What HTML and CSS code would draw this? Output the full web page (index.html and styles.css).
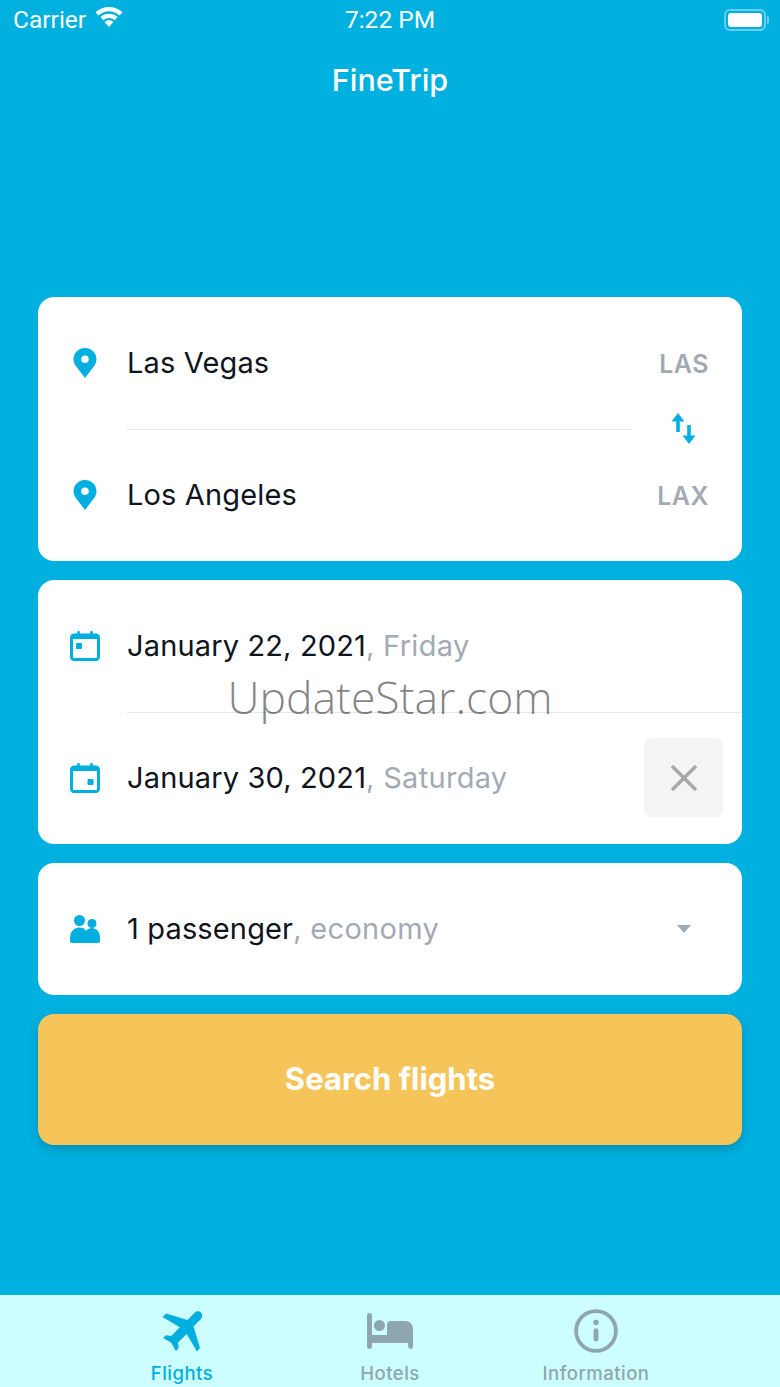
FILE: index.html
```html
<!DOCTYPE html>
<html lang="en">
<head>
<meta charset="utf-8">
<title>FineTrip</title>
<link rel="stylesheet" href="styles.css">
</head>
<body>
<div class="screen">
  <div class="status">
    <div class="status-left">
      <span>Carrier</span>
      <svg class="wifi" viewBox="0 0 28 22"><path d="M14 1C8.800 1 4.300 3 .6 6.300l2.800 3.200C6.400 6.900 10 5.300 14 5.300s7.600 1.600 10.600 4.200l2.800-3.200C23.700 3 19.200 1 14 1z"/><path d="M14 7.800c-3.300 0-6.100 1.200-8.500 3.200l2.900 3.200c1.500-1.300 3.400-2.100 5.600-2.100s4.100.8 5.600 2.100l2.900-3.200c-2.400-2-5.200-3.200-8.500-3.200z"/><path d="M14 14.300c-1.700 0-3.200.6-4.300 1.700l4.300 5 4.300-5c-1.100-1.100-2.600-1.700-4.300-1.700z"/></svg>
    </div>
    <div class="status-time">7:22 PM</div>
    <div class="battery"><span class="battery-fill"></span></div>
  </div>
  <header class="nav">FineTrip</header>

  <main class="form">
    <section class="card">
      <div class="row">
        <svg class="ico" viewBox="0 0 30 30"><path fill-rule="evenodd" d="M15 0C8.600 0 3.500 4.900 3.500 11.200c0 3.200 1.500 5.800 3.500 8.300L15 30l8-10.500c2-2.500 3.500-5.100 3.500-8.300C26.500 4.900 21.400 0 15 0zm0 7.500a3.800 3.800 0 1 1 0 7.600 3.800 3.800 0 0 1 0-7.600z"/></svg>
        <span class="main">Las Vegas</span>
        <span class="code">LAS</span>
      </div>
      <div class="rule rule-short"></div>
      <svg class="swap" viewBox="0 0 26 33"><path d="M8 1l6.500 8.500h-4.700V20H6.200V9.500H1.500z"/><path d="M17.200 13h3.600v10.500h4.700L19 32l-6.500-8.500h4.700z"/></svg>
      <div class="row">
        <svg class="ico" viewBox="0 0 30 30"><path fill-rule="evenodd" d="M15 0C8.600 0 3.500 4.900 3.500 11.200c0 3.200 1.500 5.800 3.500 8.300L15 30l8-10.500c2-2.500 3.500-5.100 3.500-8.300C26.500 4.900 21.400 0 15 0zm0 7.500a3.800 3.800 0 1 1 0 7.600 3.800 3.800 0 0 1 0-7.600z"/></svg>
        <span class="main">Los Angeles</span>
        <span class="code">LAX</span>
      </div>
    </section>

    <section class="card">
      <div class="row">
        <svg class="ico" viewBox="0 0 30 30"><path fill-rule="evenodd" d="M8.500 0c.8 0 1.300.5 1.300 1.300V2.500h10.400V1.300c0-.8.500-1.300 1.300-1.300s1.300.5 1.300 1.300v1.200H26c2.300 0 4 1.700 4 4V26c0 2.300-1.700 4-4 4H4c-2.300 0-4-1.700-4-4V6.500c0-2.300 1.700-4 4-4h3.200V1.300C7.200.5 7.700 0 8.500 0zM3 8v18c0 .6.400 1 1 1h22c.6 0 1-.4 1-1V8z"/><rect x="6" y="12" width="6" height="6" rx="1"/></svg>
        <span class="main">January 22, 2021<span class="sub">, Friday</span></span>
      </div>
      <div class="rule rule-full"></div>
      <div class="row">
        <svg class="ico" viewBox="0 0 30 30"><path fill-rule="evenodd" d="M8.500 0c.8 0 1.300.5 1.300 1.300V2.500h10.400V1.300c0-.8.500-1.300 1.300-1.300s1.300.5 1.300 1.300v1.200H26c2.300 0 4 1.700 4 4V26c0 2.300-1.700 4-4 4H4c-2.300 0-4-1.700-4-4V6.500c0-2.300 1.700-4 4-4h3.200V1.300C7.200.5 7.700 0 8.500 0zM3 8v18c0 .6.400 1 1 1h22c.6 0 1-.4 1-1V8z"/><rect x="17.500" y="16" width="6" height="6" rx="1"/></svg>
        <span class="main">January 30, 2021<span class="sub">, Saturday</span></span>
        <button class="clear" type="button" aria-label="Clear">
          <svg viewBox="0 0 28 28"><path d="M2 2l24 24M26 2L2 26"/></svg>
        </button>
      </div>
    </section>

    <section class="card">
      <div class="row">
        <svg class="ico" viewBox="0 0 30 30"><circle cx="9.500" cy="6.500" r="5.500"/><circle cx="22" cy="9.500" r="4.500"/><path d="M0 27v-3C0 17.500 4.500 13.500 9.500 13.500c3 0 5 1 6.500 3.200 1.500-1.900 3.500-2.700 6-2.700 4 0 8 3.500 8 9.500v3.500c0 1.200-.8 2-2 2H2c-1.200 0-2-.8-2-2z"/></svg>
        <span class="main">1 passenger<span class="sub">, economy</span></span>
        <span class="caret"></span>
      </div>
    </section>

    <button class="search" type="button">Search flights</button>
  </main>

  <nav class="tabs">
    <div class="tab tab-active">
      <svg class="tab-ico" viewBox="0 0 44 44"><path d="M41 3.500c-1.800-1.700-4.600-1.500-6.400.3L27.500 11 6 4.500 2.500 8l17.300 10.300-8.600 8.800-5.200-.9L3 29l8.200 4.500 4.600 8.500 2.900-3-.8-5.300 8.800-8.700L37 42.500l3-3.500-6.500-21.500 7.200-7.300c1.900-1.800 2-4.900.3-6.700z"/></svg>
      <span>Flights</span>
    </div>
    <div class="tab">
      <svg class="tab-ico tab-bed" viewBox="0 0 46 36"><rect width="5" height="36" rx="2.400"/><path d="M20 22V11.500C20 9.500 21.500 8 23.500 8H38c4.600 0 8 3.400 8 8v17.600a2.400 2.400 0 0 1-4.800 0V30H3v-8z"/><circle cx="12.500" cy="12.500" r="5.500"/></svg>
      <span>Hotels</span>
    </div>
    <div class="tab">
      <svg class="tab-ico" viewBox="0 0 46 46"><circle class="info-ring" cx="23" cy="23" r="20.800"/><circle cx="23" cy="14" r="2.800"/><rect x="20.500" y="20" width="5" height="14" rx="2.500"/></svg>
      <span>Information</span>
    </div>
  </nav>

  <div class="watermark">UpdateStar.com</div>
</div>
</body>
</html>
```
FILE: styles.css
```css
* { box-sizing: border-box; }
html, body { margin: 0; padding: 0; }
body { font-family: Inter, "Liberation Sans", sans-serif; }

.screen {
  position: relative;
  width: 780px;
  height: 1387px;
  overflow: hidden;
  background: #00b0df;
  display: flex;
  flex-direction: column;
  color: #fff;
}

.status {
  height: 40px;
  padding: 0 13px 1px;
  display: grid;
  grid-template-columns: 1fr auto 1fr;
  align-items: center;
  font-family: Roboto, sans-serif;
  font-size: 24.500px;
}
.status-left { display: flex; align-items: center; gap: 9px; }
.wifi { width: 28px; height: 22px; fill: #fff; margin-top: -5px; }
.battery {
  position: relative;
  justify-self: end;
  width: 42px;
  height: 22px;
  margin-right: 1px;
  border: 2px solid #66d0ec;
  border-radius: 6px;
  padding: 2px;
}
.battery::after {
  content: "";
  position: absolute;
  right: -5px;
  top: 5px;
  width: 2px;
  height: 8px;
  background: #66d0ec;
  border-radius: 0 2px 2px 0;
}
.battery-fill { display: block; height: 100%; background: #fff; border-radius: 3px; }

.nav {
  height: 78px;
  display: flex;
  justify-content: center;
  align-items: center;
  font-size: 30.500px;
  font-weight: 500;
}

.form {
  margin-top: 179px;
  padding: 0 38px;
  display: flex;
  flex-direction: column;
  gap: 19px;
}

.card {
  position: relative;
  background: #fff;
  border-radius: 16px;
}
.row {
  height: 132px;
  display: flex;
  align-items: center;
  padding-left: 32px;
  padding-right: 33px;
  color: #10141c;
}
.ico { width: 30px; height: 30px; fill: #00aee0; flex: none; margin-right: 27px; }
.main {
  font-size: 29px;
  font-weight: 400;
  letter-spacing: 0.15px;
  flex: 1;
  white-space: nowrap;
  padding-bottom: 2px;
}
.sub { color: #a3aab4; letter-spacing: 0.3px; }
.code { font-size: 25px; font-weight: 600; color: #a3aab4; letter-spacing: 0.5px; padding-top: 2px; }

.rule { height: 1px; margin-bottom: -1px; background: #e4e6e8; }
.rule-short { margin-left: 89px; margin-right: 110px; }
.rule-full { margin-left: 89px; }
.swap {
  position: absolute;
  left: 632px;
  top: 115px;
  width: 26px;
  height: 33px;
  fill: #00aee0;
}

.clear {
  position: absolute;
  right: 19px;
  bottom: 27px;
  width: 79px;
  height: 79px;
  border: 0;
  border-radius: 8px;
  background: #f4f4f4;
  display: flex;
  align-items: center;
  justify-content: center;
  padding: 0;
}
.clear svg { width: 28px; height: 28px; fill: none; stroke: #a8a8a8; stroke-width: 3.500px; }

.caret {
  width: 0;
  height: 0;
  border-left: 7px solid transparent;
  border-right: 7px solid transparent;
  border-top: 8px solid #a3aab4;
  margin-right: 18px;
}

.search {
  height: 131px;
  padding: 0 0 2px;
  border: 0;
  border-radius: 16px;
  background: #f6c559;
  color: #fff;
  font-family: inherit;
  font-size: 31px;
  font-weight: 700;
  box-shadow: 0 4px 10px rgba(0, 60, 90, 0.3);
}

.tabs {
  margin-top: auto;
  height: 92px;
  background: #ccfdff;
  padding-left: 130px;
  display: grid;
  grid-template-columns: 104px 312px 100px;
  justify-content: start;
  color: #8fa6ae;
  font-size: 18.500px;
  font-weight: 500;
  letter-spacing: 0.5px;
}
.tab {
  display: flex;
  flex-direction: column;
  align-items: center;
  white-space: nowrap;
}
.tab-ico { width: 44px; height: 44px; margin-top: 14px; fill: #8fa6ae; flex: none; }
.tab-bed { width: 46px; height: 36px; margin-top: 18px; margin-bottom: 4px; }
.tab span { margin-top: 9px; }
.tab-active { color: #00aee0; }
.tab-active .tab-ico { fill: #00aee0; }
.info-ring { fill: none; stroke: #8fa6ae; stroke-width: 4px; }

.watermark {
  position: absolute;
  left: 0;
  right: 0;
  top: 666px;
  text-align: center;
  font-family: "Open Sans", sans-serif;
  font-size: 44.500px;
  font-weight: 300;
  color: rgba(60, 60, 60, 0.65);
  pointer-events: none;
}
```
